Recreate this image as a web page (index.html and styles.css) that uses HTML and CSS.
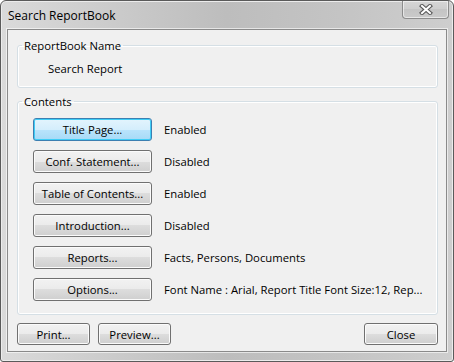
FILE: index.html
```html
<!DOCTYPE html>
<html lang="en">
<head>
    <meta charset="UTF-8">
    <title>Search ReportBook</title>
    <link rel="stylesheet" href="styles.css">
</head>
<body>
    <div class="window">
        <div class="titlebar">
            <span class="title">Search ReportBook</span>
            <div class="close-btn">
                <svg width="14" height="11" viewBox="0 0 14 11">
                    <path d="M3 2 L11 9 M11 2 L3 9" stroke="#5a5a5a" stroke-width="4.2" stroke-linecap="square" fill="none"/>
                    <path d="M3 2 L11 9 M11 2 L3 9" stroke="#ffffff" stroke-width="2" stroke-linecap="square" fill="none"/>
                </svg>
            </div>
        </div>
        <div class="client">
            <fieldset class="group">
                <legend>ReportBook Name</legend>
                <div class="name">Search Report</div>
            </fieldset>

            <fieldset class="group contents">
                <legend>Contents</legend>
                <div class="rows">
                    <div class="row"><div class="button default">Title Page...</div><span>Enabled</span></div>
                    <div class="row"><div class="button">Conf. Statement...</div><span>Disabled</span></div>
                    <div class="row"><div class="button">Table of Contents...</div><span>Enabled</span></div>
                    <div class="row"><div class="button">Introduction...</div><span>Disabled</span></div>
                    <div class="row"><div class="button">Reports...</div><span>Facts, Persons, Documents</span></div>
                    <div class="row"><div class="button">Options...</div><span>Font Name : Arial, Report Title Font Size:12, Rep...</span></div>
                </div>
            </fieldset>

            <div class="footer">
                <div class="button small">Print...</div>
                <div class="button small">Preview...</div>
                <div class="button small close">Close</div>
            </div>
        </div>
    </div>
</body>
</html>
```

FILE: styles.css
```css
body {
    margin: 0;
    padding: 0;
    background: #ffffff;
    font-family: "Open Sans", "Liberation Sans", sans-serif;
    font-size: 11.3px;
    color: #000;
}

.window {
    width: 454px;
    height: 362px;
    box-sizing: border-box;
    border: 1px solid #5a5a5a;
    border-radius: 6px 6px 3px 3px;
    background: linear-gradient(90deg, #dadada 0%, #c8c8c8 30%, #bdbdbd 50%, #c4c4c4 75%, #cecece 100%);
    box-shadow: inset 0 0 0 1px #ececec;
    display: flex;
    flex-direction: column;
}

.titlebar {
    height: 28px;
    display: flex;
    align-items: flex-start;
}

.title {
    padding: 7px 0 0 7px;
    line-height: 15px;
    font-size: 12px;
}

.close-btn {
    margin-left: auto;
    margin-right: 4px;
    width: 45px;
    height: 17px;
    border: 1px solid #8c8c8c;
    border-top: none;
    border-radius: 0 0 4px 4px;
    background: linear-gradient(#d6d6d6, #cdcdcd 50%, #c4c4c4 50%, #cacaca);
    box-shadow: inset 0 0 0 1px rgba(255, 255, 255, 0.55);
    display: flex;
    justify-content: center;
    align-items: center;
}

.client {
    margin: 0 6px 9px 6px;
    flex: 1;
    border: 1px solid #8a8a8a;
    box-shadow: 0 0 0 1px rgba(255, 255, 255, 0.6);
    background: #f0f0f0;
    display: flex;
    flex-direction: column;
}

.group {
    margin: 8px 8px 0 9px;
    padding: 8px 0 11px 4px;
    border: 1px solid #d5dfe5;
    border-radius: 3px;
    box-shadow: inset 0 0 0 1px #ffffff;
    min-width: 0;
}

.group legend {
    padding: 0 2px;
    line-height: 15px;
}

.name {
    margin-left: 26px;
    line-height: 15px;
}

.contents {
    margin-top: 6px;
    padding-top: 9px;
    padding-bottom: 13px;
}

.rows {
    display: flex;
    flex-direction: column;
    gap: 9px;
    margin-left: 11px;
}

.row {
    display: flex;
    align-items: center;
    gap: 12px;
    white-space: nowrap;
}

.button {
    width: 119px;
    height: 23px;
    box-sizing: border-box;
    border: 1px solid #707070;
    border-radius: 3px;
    background: linear-gradient(#f2f2f2 0%, #ebebeb 50%, #dddddd 50%, #cfcfcf 100%);
    box-shadow: inset 0 0 0 1px #fbfbfb;
    display: flex;
    justify-content: center;
    align-items: center;
    flex-shrink: 0;
}

.button.default {
    border-color: #3c7fb1;
    background: linear-gradient(#e3f4fd 0%, #d4eefc 50%, #bae4fc 50%, #a6daf7 100%);
    box-shadow: inset 0 0 0 1px #3fcdf6;
}

.footer {
    display: flex;
    gap: 8px;
    margin: 8px 8px 0 9px;
}

.button.small {
    width: 73px;
    height: 22px;
}

.button.close {
    margin-left: auto;
    width: 74px;
}
```
